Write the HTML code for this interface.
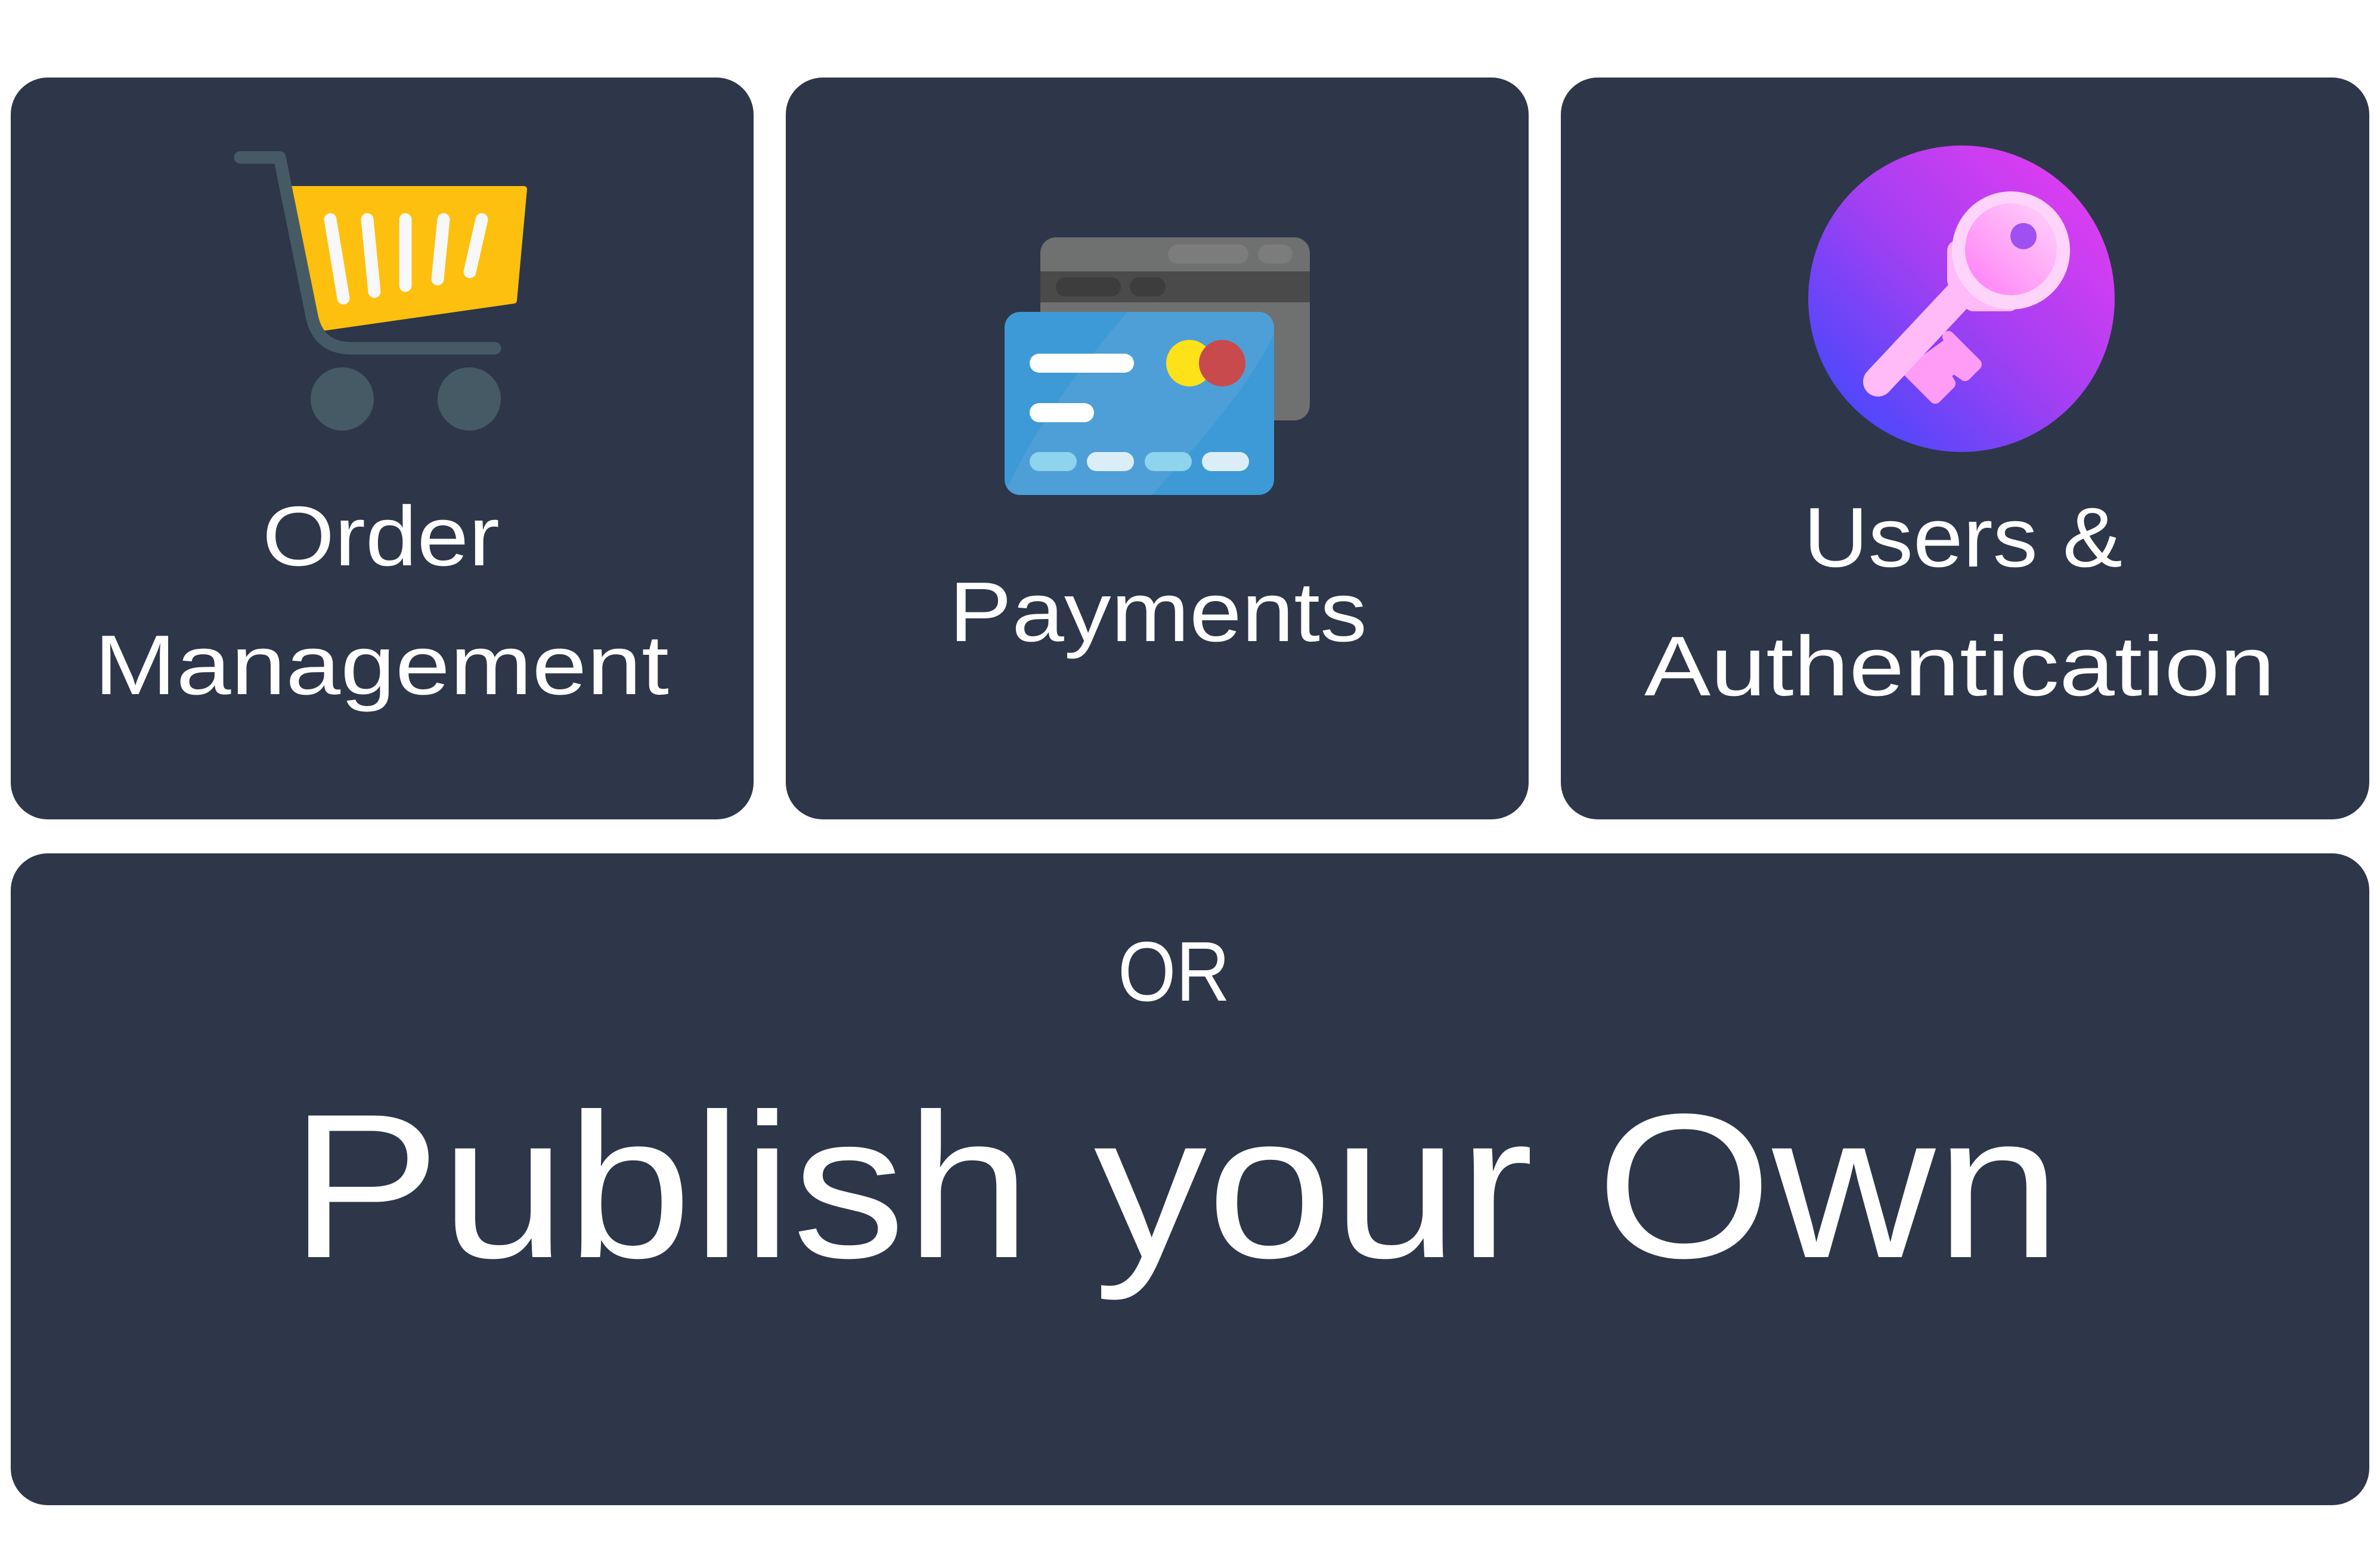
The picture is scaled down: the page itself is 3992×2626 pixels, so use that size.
<!DOCTYPE html>
<html><head><meta charset="utf-8"><style>html,body{margin:0;padding:0;background:#fff}svg{display:block}</style></head>
<body>
<svg width="3992" height="2626" viewBox="0 0 3992 2626" xmlns="http://www.w3.org/2000/svg">
<defs>
<linearGradient id="kg" x1="0" y1="1" x2="1" y2="0">
<stop offset="0" stop-color="#2f4bff"/><stop offset="0.5" stop-color="#a43ff2"/><stop offset="1" stop-color="#f03cf0"/>
</linearGradient>
<linearGradient id="ring" x1="0" y1="1" x2="1" y2="0">
<stop offset="0" stop-color="#ff7cf6"/><stop offset="1" stop-color="#ffd4fa"/>
</linearGradient>
<clipPath id="bc"><rect x="1685" y="523" width="452" height="307" rx="26"/></clipPath>
</defs>
<rect width="3992" height="2626" fill="#fff"/>
<g fill="#2e3649">
<rect x="18" y="130" width="1246" height="1244" rx="62"/>
<rect x="1318" y="130" width="1246" height="1244" rx="62"/>
<rect x="2618" y="130" width="1356" height="1244" rx="62"/>
<rect x="18" y="1431" width="3956" height="1093" rx="62"/>
</g>
<!-- cart -->
<polygon points="489,317 879,317 862,504 540,550" fill="#fdc00f" stroke="#fdc00f" stroke-width="10" stroke-linejoin="round"/>
<g stroke="#f8f8f8" stroke-width="21" stroke-linecap="round">
<line x1="554" y1="368" x2="576" y2="500"/>
<line x1="616" y1="368" x2="628" y2="489"/>
<line x1="680" y1="368" x2="680" y2="479"/>
<line x1="744" y1="368" x2="734" y2="468"/>
<line x1="808" y1="368" x2="788" y2="456"/>
</g>
<path d="M403 264 H469 L523 530 Q534 584 590 584 H830" fill="none" stroke="#465a65" stroke-width="21" stroke-linecap="round" stroke-linejoin="round"/>
<circle cx="574" cy="669" r="53" fill="#465a65"/>
<circle cx="787" cy="669" r="53" fill="#465a65"/>
<!-- payments -->
<rect x="1745" y="398" width="452" height="307" rx="26" fill="#6f7170"/>
<rect x="1745" y="455" width="452" height="52" fill="#4a4a4a"/>
<rect x="1959" y="410" width="135" height="32" rx="16" fill="#7b7c7b"/>
<rect x="2110" y="410" width="58" height="32" rx="16" fill="#7b7c7b"/>
<rect x="1771" y="465" width="109" height="32" rx="16" fill="#3d3d3d"/>
<rect x="1895" y="465" width="60" height="32" rx="16" fill="#3d3d3d"/>
<rect x="1685" y="523" width="452" height="307" rx="26" fill="#3d9ad6"/>
<path clip-path="url(#bc)" d="M1891 523 Q1740 700 1685 830 H1932 Q2090 660 2137 560 V523 Z" fill="#4e9fd7"/>
<rect x="1727" y="593" width="175" height="32" rx="16" fill="#fff"/>
<rect x="1727" y="676" width="108" height="32" rx="16" fill="#fff"/>
<circle cx="1995" cy="609" r="39" fill="#fde21a"/>
<circle cx="2050" cy="609" r="39" fill="#c94a4c"/>
<rect x="1727" y="758" width="79" height="32" rx="16" fill="#8dd4ec"/>
<rect x="1823" y="758" width="79" height="32" rx="16" fill="#dbeef7"/>
<rect x="1920" y="758" width="79" height="32" rx="16" fill="#8dd4ec"/>
<rect x="2016" y="758" width="79" height="32" rx="16" fill="#dbeef7"/>
<!-- key -->
<circle cx="3290" cy="501" r="257" fill="url(#kg)"/>
<g stroke-linecap="round" stroke-linejoin="round">
<polyline points="3268,565 3314,611 3296,629 3276,615 3262,629 3270,643 3246,667 3196,617" fill="#ff9cf5" stroke="#ff9cf5" stroke-width="20"/>
<line x1="3300" y1="480" x2="3150" y2="640" stroke="#ffbaf8" stroke-width="50"/>
<line x1="3283" y1="470" x2="3283" y2="420" stroke="#ffbaf8" stroke-width="34"/>
<line x1="3310" y1="505" x2="3370" y2="505" stroke="#ffbaf8" stroke-width="34"/>
</g>
<circle cx="3373" cy="420" r="99" fill="#ffd4fa"/>
<circle cx="3373" cy="418" r="77" fill="url(#ring)"/>
<circle cx="3394" cy="396" r="22" fill="#a050f0"/>
<!-- text -->
<g fill="#fff" font-family="'Liberation Sans', sans-serif" font-size="142">
<text x="440" y="948" textLength="398" lengthAdjust="spacingAndGlyphs">Order</text>
<text x="158" y="1164" textLength="964" lengthAdjust="spacingAndGlyphs">Management</text>
<text x="1592" y="1075" textLength="701" lengthAdjust="spacingAndGlyphs">Payments</text>
<text x="3025" y="950" textLength="535" lengthAdjust="spacingAndGlyphs">Users &amp;</text>
<text x="2758" y="1166" textLength="1058" lengthAdjust="spacingAndGlyphs">Authentication</text>
<text x="1875" y="1678" textLength="188" lengthAdjust="spacingAndGlyphs">OR</text>
<text x="486" y="2108" font-size="345" textLength="2971" lengthAdjust="spacingAndGlyphs">Publish your Own</text>
</g>
</svg>
</body></html>
